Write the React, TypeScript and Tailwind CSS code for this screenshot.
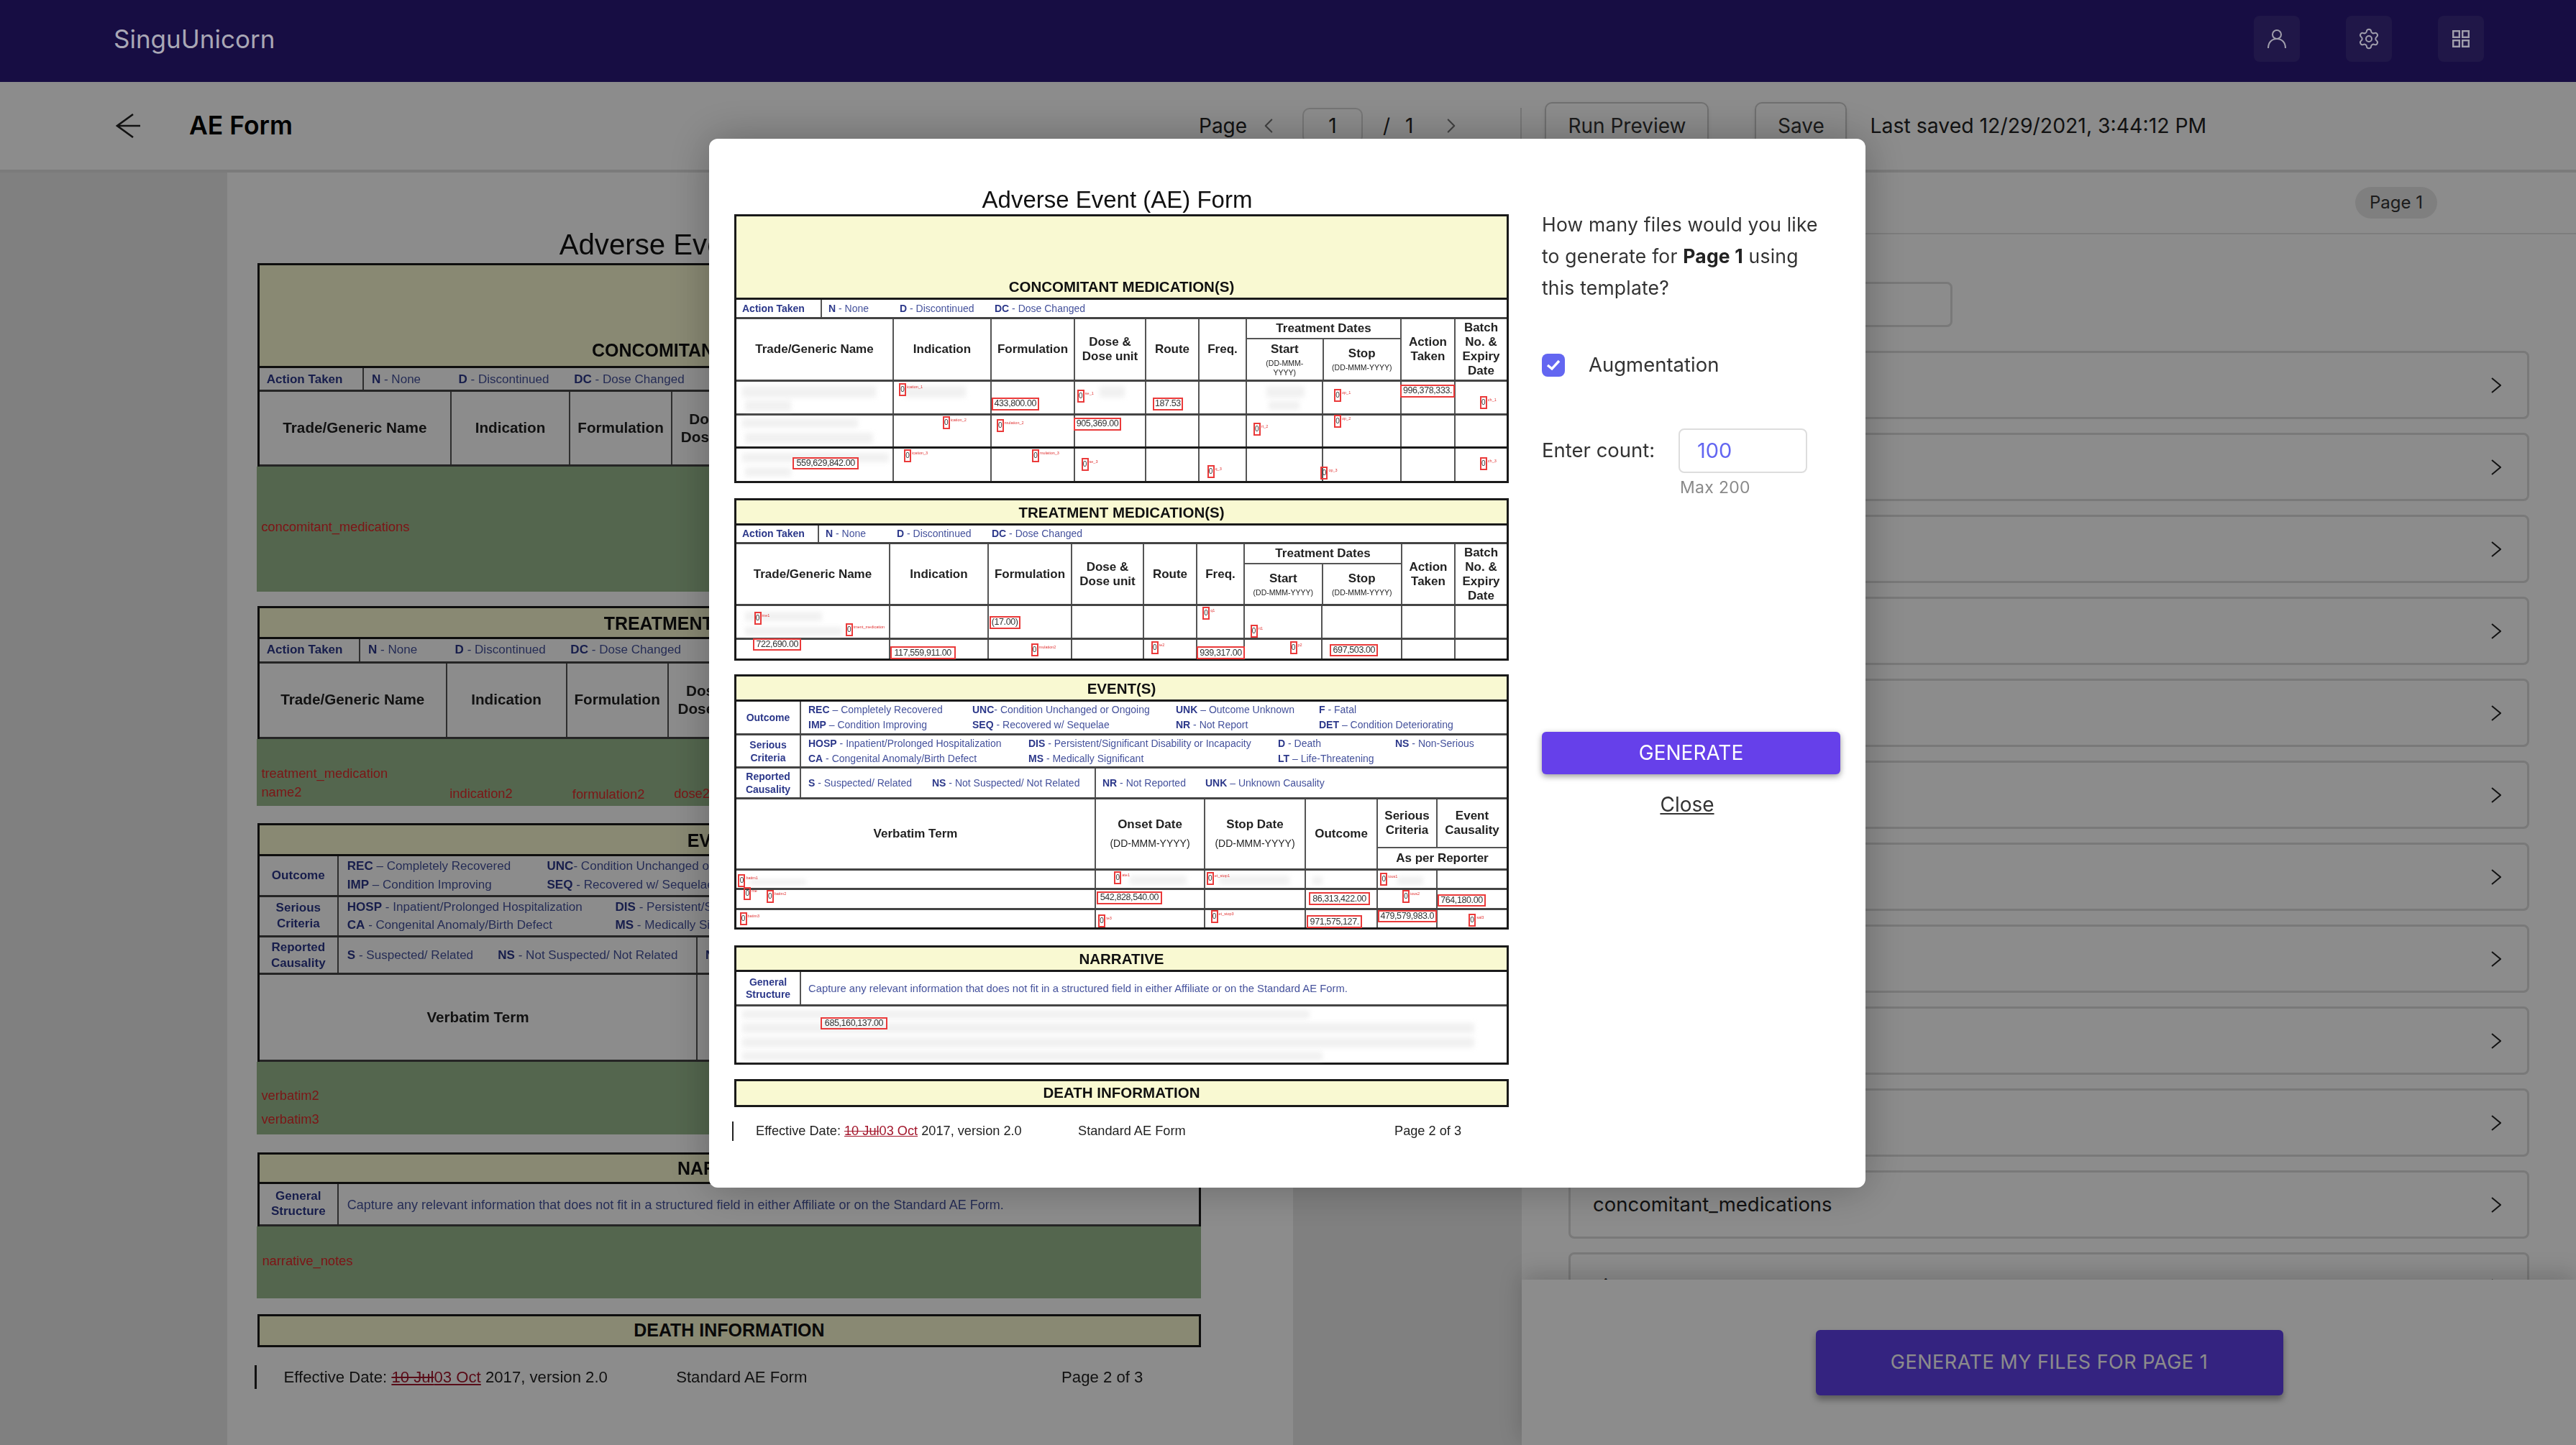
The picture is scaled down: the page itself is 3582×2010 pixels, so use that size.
import React from "react";
import { Settings, ChevronLeft, ChevronRight } from "lucide-react";

const BLUE = "text-[#45529c]";
const BOLD = "font-bold text-[#2c388a]";
const ARIAL = "font-['Liberation_Sans',Arial,sans-serif]";

type Z = [number, number, number, number];
const Z2: Z = [1000, 190, 1.4, 3];
const Z3: Z = [1000, 680, 1.4, 2.45];
const Z4: Z = [1000, 1290, 1.4, 3];
const ox = (z: Z, x: number) => z[0] + x / z[2] - 1021;
const oy = (z: Z, y: number) => z[1] + y / z[3] - 258;

const VALUES: [Z, number, number, number, number, string][] = [
  [Z2, 530, 1088, 623, 1142, "433,800.00"],
  [Z2, 844, 1088, 903, 1142, "187.53"],
  [Z2, 1326, 1034, 1432, 1088, "996,378,333."],
  [Z2, 690, 1172, 783, 1226, "905,369.00"],
  [Z2, 143, 1338, 272, 1390, "559,629,842.00"],
  [Z3, 526, 433, 586, 477, "(17.00)"],
  [Z3, 66, 510, 160, 552, "722,690.00"],
  [Z3, 333, 537, 460, 580, "117,559,911.00"],
  [Z3, 930, 537, 1023, 580, "939,317.00"],
  [Z3, 1189, 528, 1283, 570, "697,503.00"],
  [Z3, 735, 1371, 862, 1415, "542,828,540.00"],
  [Z3, 1148, 1375, 1267, 1418, "86,313,422.00"],
  [Z3, 1399, 1381, 1492, 1424, "764,180.00"],
  [Z3, 1144, 1453, 1252, 1496, "971,575,127."],
  [Z3, 1282, 1436, 1397, 1477, "479,579,983.0"],
  [Z4, 197, 374, 328, 427, "685,160,137.00"],
];

const PINS: [Z, number, number, string][] = [
  [Z2, 350, 1030, "ication_1"], [Z2, 697, 1056, "se_1"], [Z2, 1197, 1052, "op_1"], [Z2, 1481, 1082, "ch_1"],
  [Z2, 435, 1166, "ication_2"], [Z2, 540, 1178, "mulation_2"], [Z2, 1197, 1160, "op_2"], [Z2, 1040, 1194, "rt_2"],
  [Z2, 360, 1306, "ication_3"], [Z2, 609, 1306, "mulation_3"], [Z2, 705, 1340, "se_3"], [Z2, 950, 1370, "q_3"],
  [Z2, 1171, 1376, "op_3"], [Z2, 1481, 1338, "ch_3"],
  [Z3, 68, 418, "me1"], [Z3, 246, 458, "tment_medication"], [Z3, 941, 403, "q1"], [Z3, 1034, 463, "rt1"],
  [Z3, 607, 527, "mulation2"], [Z3, 841, 519, "te2"], [Z3, 1111, 519, "p2"],
  [Z3, 37, 1312, "batim1"], [Z3, 769, 1303, "ate1"], [Z3, 949, 1307, "et_stop1"], [Z3, 1287, 1308, "ious1"],
  [Z3, 48, 1358, "me"], [Z3, 92, 1367, "batim2"], [Z3, 1330, 1367, "ious2"], [Z3, 40, 1443, "batim3"],
  [Z3, 738, 1451, "te3"], [Z3, 957, 1435, "et_stop3"], [Z3, 1459, 1447, "sal3"],
];

const SMUDGES: [Z, number, number, number, number][] = [
  [Z2, 45, 1040, 305, 1090], [Z2, 50, 1100, 140, 1145], [Z2, 360, 1040, 480, 1090], [Z2, 740, 1040, 790, 1090],
  [Z2, 1065, 1040, 1140, 1090], [Z2, 1070, 1105, 1130, 1140], [Z2, 45, 1175, 270, 1215], [Z2, 50, 1235, 300, 1280],
  [Z2, 45, 1320, 330, 1360], [Z2, 50, 1380, 140, 1420],
  [Z3, 50, 420, 200, 450], [Z3, 50, 470, 240, 500], [Z3, 60, 1330, 170, 1350], [Z3, 800, 1318, 910, 1350],
  [Z3, 975, 1318, 1110, 1350], [Z3, 1155, 1320, 1175, 1350], [Z3, 1320, 1320, 1370, 1350],
  [Z4, 45, 345, 1150, 380], [Z4, 45, 400, 1470, 440], [Z4, 45, 460, 1470, 500], [Z4, 45, 520, 1175, 555],
];

function Section({ className = "", children }: { className?: string; children: React.ReactNode }) {
  return <div className={"relative flex flex-col border-[3px] border-[#1a1a1a] " + className}>{children}</div>;
}

function Banner({ title, className }: { title: string; className: string }) {
  return (
    <div className={"flex items-end justify-center border-b-[3px] border-[#1a1a1a] bg-[#f9f9d2] text-[20.5px] leading-[24px] font-bold text-[#111] " + className}>
      {title}
    </div>
  );
}

function ActionRow({ cols, className }: { cols: string; className: string }) {
  return (
    <div className={"flex items-center border-b-[3px] border-[#444] text-[14px] " + BLUE + " " + className}>
      <div className={"flex h-full items-center border-r-2 border-[#555] " + cols + " pl-[8px] " + BOLD}>Action Taken</div>
      <div className="ml-[9px] w-[99px]"><b className={BOLD}>N</b> - None</div>
      <div className="w-[132px]"><b className={BOLD}>D</b> - Discontinued</div>
      <div><b className={BOLD}>DC</b> - Dose Changed</div>
    </div>
  );
}

function Head({ className, children }: { className?: string; children: React.ReactNode }) {
  return <div className={"flex flex-col items-center justify-center border-r-2 border-[#555] text-center text-[17px] leading-[20px] font-bold text-[#222] last:border-r-0 " + (className ?? "")}>{children}</div>;
}

function MedHeader({ grid, className, wrapStart }: { grid: string; className: string; wrapStart?: boolean }) {
  return (
    <div className={"grid border-b-[3px] border-[#444] " + grid + " " + className}>
      <Head>Trade/Generic Name</Head>
      <Head>Indication</Head>
      <Head>Formulation</Head>
      <Head>Dose &amp;<br />Dose unit</Head>
      <Head>Route</Head>
      <Head>Freq.</Head>
      <div className="col-span-2 flex flex-col border-r-2 border-[#555]">
        <div className="flex h-[28px] shrink-0 items-center justify-center border-b-2 border-[#555] text-[17px] font-bold text-[#222]">Treatment Dates</div>
        <div className="grid flex-1 grid-cols-2">
          <Head>
            Start
            <span className="mt-[3px] text-[10.5px] leading-[13px] font-normal">
              {wrapStart ? <>(DD-MMM-<br />YYYY)</> : "(DD-MMM-YYYY)"}
            </span>
          </Head>
          <Head className="border-r-0">Stop<span className="mt-[3px] text-[10.5px] leading-[13px] font-normal">(DD-MMM-YYYY)</span></Head>
        </div>
      </div>
      <Head>Action<br />Taken</Head>
      <Head>Batch<br />No. &amp;<br />Expiry<br />Date</Head>
    </div>
  );
}

function Row({ grid, count, className }: { grid: string; count: number; className: string }) {
  return (
    <div className={"grid " + grid + " " + className}>
      {Array.from({ length: count }).map((_, i) => (
        <div key={i} className="border-r-2 border-[#555] last:border-r-0" />
      ))}
    </div>
  );
}

function Green({ className, children }: { className: string; children: React.ReactNode }) {
  return <div className={"relative -mx-[3px] -mb-[3px] bg-[#99bb8f] text-[15px] text-[#e02a2a] " + className}>{children}</div>;
}

const MED1 = "grid-cols-[219px_136px_116px_99px_74px_66px_106px_109px_75px_71px]";
const MED2 = "grid-cols-[214px_137px_116px_100px_74px_66px_108px_111px_74px_71px]";
const EVT = "grid-cols-[500px_152px_140px_100px_83px_96px]";

function Form({ bg }: { bg: boolean }) {
  return (
    <div className={"relative w-[1077px] blur-[0.35px] " + ARIAL}>
      <div className="flex h-[40px] items-center justify-center pr-[12px] text-[33px] leading-[40px] text-[#111]">Adverse Event (AE) Form</div>

      <Section>
        <Banner title="CONCOMITANT MEDICATION(S)" className={bg ? "h-[118px] pb-[6px]" : "h-[116px] pb-[3px]"} />
        <ActionRow cols="w-[119px]" className="h-[27px]" />
        <MedHeader grid={MED1} className={bg ? "h-[85px]" : "h-[87px]"} wrapStart />
        {bg ? (
          <Green className="h-[143px]">
            <span className="absolute top-[58px] left-[5px]">concomitant_medications</span>
          </Green>
        ) : (
          <>
            <Row grid={MED1} count={10} className="h-[47px] border-b-[3px] border-[#444]" />
            <Row grid={MED1} count={10} className="h-[46px] border-b-[3px] border-[#1a1a1a]" />
            <Row grid={MED1} count={10} className="h-[45px]" />
          </>
        )}
      </Section>

      <Section className={bg ? "mt-[17px]" : "mt-[21px]"}>
        <Banner title="TREATMENT MEDICATION(S)" className="h-[35px] pb-[3px]" />
        <ActionRow cols="w-[115px]" className={bg ? "h-[28px]" : "h-[26px]"} />
        <MedHeader grid={MED2} className="h-[86px]" />
        {bg ? (
          <Green className="h-[77px]">
            <span className="absolute top-[28px] left-[5px]">treatment_medication</span>
            <span className="absolute top-[50px] left-[5px]">name2</span>
            <span className="absolute top-[51px] left-[220px]">indication2</span>
            <span className="absolute top-[52px] left-[360px]">formulation2</span>
            <span className="absolute top-[51px] left-[476px]">dose2</span>
          </Green>
        ) : (
          <>
            <Row grid={MED2} count={10} className="h-[47px] border-b-[3px] border-[#444]" />
            <Row grid={MED2} count={10} className="h-[26px]" />
          </>
        )}
      </Section>

      <Section className={bg ? "mt-[20px]" : "mt-[19px]"}>
        <Banner title="EVENT(S)" className="h-[35px] pb-[3px]" />
        <div className={"flex h-[47px] border-b-[3px] border-[#444] text-[14px] leading-[21px] " + BLUE}>
          <div className={"flex w-[90px] shrink-0 items-center justify-center border-r-2 border-[#555] text-[14px] " + BOLD}>Outcome</div>
          <div className="grid flex-1 grid-cols-[228px_283px_199px_1fr] content-center pl-[10px]">
            <div><b className={BOLD}>REC</b> – Completely Recovered</div>
            <div><b className={BOLD}>UNC</b>- Condition Unchanged or Ongoing</div>
            <div><b className={BOLD}>UNK</b> – Outcome Unknown</div>
            <div><b className={BOLD}>F</b> - Fatal</div>
            <div><b className={BOLD}>IMP</b> – Condition Improving</div>
            <div><b className={BOLD}>SEQ</b> - Recovered w/ Sequelae</div>
            <div><b className={BOLD}>NR</b> - Not Report</div>
            <div><b className={BOLD}>DET</b> – Condition Deteriorating</div>
          </div>
        </div>
        <div className={"flex h-[46px] border-b-[3px] border-[#444] text-[14px] leading-[21px] " + BLUE}>
          <div className={"flex w-[90px] shrink-0 items-center justify-center border-r-2 border-[#555] text-center text-[14px] leading-[18px] " + BOLD}>Serious<br />Criteria</div>
          <div className="grid flex-1 grid-cols-[306px_347px_163px_1fr] content-center pl-[10px]">
            <div className="whitespace-nowrap"><b className={BOLD}>HOSP</b> - Inpatient/Prolonged Hospitalization</div>
            <div className="whitespace-nowrap"><b className={BOLD}>DIS</b> - Persistent/Significant Disability or Incapacity</div>
            <div><b className={BOLD}>D</b> - Death</div>
            <div><b className={BOLD}>NS</b> - Non-Serious</div>
            <div className="whitespace-nowrap"><b className={BOLD}>CA</b> - Congenital Anomaly/Birth Defect</div>
            <div><b className={BOLD}>MS</b> - Medically Significant</div>
            <div><b className={BOLD}>LT</b> – Life-Threatening</div>
            <div />
          </div>
        </div>
        <div className={"flex h-[43px] border-b-[3px] border-[#444] text-[14px] " + BLUE}>
          <div className={"flex w-[90px] shrink-0 items-center justify-center border-r-2 border-[#555] text-center text-[14px] leading-[18px] " + BOLD}>Reported<br />Causality</div>
          <div className="flex w-[410px] items-center border-r-2 border-[#555] pl-[10px] whitespace-nowrap">
            <span className="w-[172px]"><b className={BOLD}>S</b> - Suspected/ Related</span>
            <span><b className={BOLD}>NS</b> - Not Suspected/ Not Related</span>
          </div>
          <div className="flex items-center pl-[9px] whitespace-nowrap">
            <span className="w-[143px]"><b className={BOLD}>NR</b> - Not Reported</span>
            <span><b className={BOLD}>UNK</b> – Unknown Causality</span>
          </div>
        </div>
        <div className={"grid h-[99px] border-b-[3px] border-[#444] " + EVT}>
          <Head>Verbatim Term</Head>
          <Head>Onset Date<span className="mt-[6px] text-[14px] font-normal">(DD-MMM-YYYY)</span></Head>
          <Head>Stop Date<span className="mt-[6px] text-[14px] font-normal">(DD-MMM-YYYY)</span></Head>
          <Head>Outcome</Head>
          <div className="col-span-2 flex flex-col">
            <div className="grid h-[68px] grid-cols-[83px_96px] border-b-2 border-[#555]">
              <Head>Serious<br />Criteria</Head>
              <Head>Event<br />Causality</Head>
            </div>
            <div className="flex flex-1 items-center justify-center text-[17px] font-bold text-[#222]">As per Reporter</div>
          </div>
        </div>
        {bg ? (
          <Green className="h-[83px]">
            <span className="absolute top-[27px] left-[5px]">verbatim2</span>
            <span className="absolute top-[54px] left-[5px]">verbatim3</span>
          </Green>
        ) : (
          <>
            <Row grid={EVT} count={6} className="h-[27px] border-b-[3px] border-[#444]" />
            <Row grid={EVT} count={6} className="h-[28px] border-b-[3px] border-[#444]" />
            <Row grid={EVT} count={6} className="h-[24px]" />
          </>
        )}
      </Section>

      <Section className={bg ? "mt-[21px]" : "mt-[22px]"}>
        <Banner title="NARRATIVE" className="h-[34px] pb-[3px]" />
        <div className={"flex h-[48px] border-b-[3px] border-[#444] text-[14.8px] " + BLUE}>
          <div className={"flex w-[90px] shrink-0 items-center justify-center border-r-2 border-[#555] text-center text-[14px] leading-[17px] " + BOLD}>General<br />Structure</div>
          <div className="flex items-center pt-[2px] pl-[10px] whitespace-nowrap">Capture any relevant information that does not fit in a structured field in either Affiliate or on the Standard AE Form.</div>
        </div>
        {bg ? (
          <Green className="h-[82px]">
            <span className="absolute top-[28px] left-[6px]">narrative_notes</span>
          </Green>
        ) : (
          <div className="h-[78px]" />
        )}
      </Section>

      <Section className={bg ? "mt-[19px]" : "mt-[20px]"}>
        <div className="flex h-[33px] items-center justify-center bg-[#f9f9d2] text-[20.5px] font-bold text-[#111]">DEATH INFORMATION</div>
      </Section>

      <div className="mt-[20px] grid h-[26px] grid-cols-[30px_448px_440px_auto] items-center text-[18.2px] whitespace-nowrap text-[#222]">
        <div className="-ml-[3px] h-full w-[2px] bg-[#222]" />
        <div>
          Effective Date: <span className="text-[#a3172c] underline"><span className="line-through">10 Jul</span>03 Oct</span> 2017, version 2.0
        </div>
        <div>Standard AE Form</div>
        <div>Page 2 of 3</div>
      </div>

      {!bg && SMUDGES.map(([z, a, b, c, d], i) => (
        <div key={"s" + i} className="absolute bg-[#dcdcdc] opacity-40 blur-[3px]" style={{ left: ox(z, a), top: oy(z, b), width: (c - a) / z[2], height: (d - b) / z[3] }} />
      ))}
      {!bg && VALUES.map(([z, a, b, c, d, t]) => (
        <div key={t} className="absolute flex items-center justify-center overflow-hidden border-2 border-[#ea3a3a] text-[12.5px] leading-none tracking-[-0.4px] whitespace-nowrap text-[#333]" style={{ left: ox(z, a), top: oy(z, b), width: (c - a) / z[2], height: (d - b) / z[3] }}>
          {t}
        </div>
      ))}
      {!bg && PINS.map(([z, a, b, t], i) => (
        <div key={"p" + i} className="absolute flex" style={{ left: ox(z, a), top: oy(z, b) }}>
          <div className="flex h-[18px] w-[10px] items-center justify-center border-2 border-[#ea3a3a] text-[10px] leading-none text-[#333]">0</div>
          <div className="ml-[1px] text-[5.5px] leading-[10px] whitespace-nowrap text-[#e03030]">{t}</div>
        </div>
      ))}
    </div>
  );
}

function Chevron() {
  return (
    <svg width="14" height="22" viewBox="0 0 14 22" fill="none" stroke="#222" strokeWidth="2">
      <path d="M1 1 L13 11 L1 21" />
    </svg>
  );
}

const ROWS = ["", "", "", "", "", "", "", "", "", "", "concomitant_medications", "sign"];

export default function App() {
  return (
    <div className="relative flex h-[2010px] w-[3582px] flex-col overflow-hidden bg-white font-['Inter',sans-serif] text-[#222]">
      <header className="relative z-30 flex h-[114px] shrink-0 items-center justify-between bg-[#170d43] pr-[128px] pb-[6px] pl-[158px]">
        <div className="text-[35px] text-[#a9a7b5]">SinguUnicorn</div>
        <div className="flex gap-[64px] text-[#a09eac]">
          <button className="flex h-[64px] w-[64px] items-center justify-center rounded-[8px] bg-[#201748]">
            <svg width="26" height="28" viewBox="0 0 26 28" fill="none" stroke="currentColor" strokeWidth="2">
              <circle cx="13" cy="8" r="6" />
              <path d="M1 27 C1 19 6 14 13 14 S25 19 25 27" />
            </svg>
          </button>
          <button className="flex h-[64px] w-[64px] items-center justify-center rounded-[8px] bg-[#201748]">
            <Settings size={32} strokeWidth={1.5} />
          </button>
          <button className="flex h-[64px] w-[64px] items-center justify-center rounded-[8px] bg-[#201748]">
            <svg width="24" height="24" viewBox="0 0 24 24" fill="none" stroke="currentColor" strokeWidth="2.4">
              <rect x="1.2" y="1.2" width="8.6" height="8.6" />
              <rect x="14.2" y="1.2" width="8.6" height="8.6" />
              <rect x="1.2" y="14.2" width="8.6" height="8.6" />
              <rect x="14.2" y="14.2" width="8.6" height="8.6" />
            </svg>
          </button>
        </div>
      </header>

      <div className="flex h-[126px] shrink-0 items-center border-b-4 border-[#e0e0e0] bg-white pl-[161px]">
        <svg width="34" height="34" viewBox="0 0 34 34" fill="none" stroke="#222" strokeWidth="2.6">
          <path d="M24 1 L2 17 L24 33 M2 17 H34" />
        </svg>
        <div className="ml-[68px] w-[1404px] text-[35.5px] leading-none font-semibold text-black">AE Form</div>
        <span className="w-[64px] text-[28px] text-[#222]">Page</span>
        <ChevronLeft size={34} strokeWidth={1.5} className="ml-[16px] text-[#777]" />
        <div className="ml-[30px] flex h-[50px] w-[84px] items-center justify-center rounded-[10px] border-2 border-[#d6d6d6] text-[28px]">1</div>
        <span className="ml-[28px] text-[28px]">/</span>
        <span className="ml-[21px] text-[28px]">1</span>
        <ChevronRight size={34} strokeWidth={1.5} className="ml-[36px] text-[#777]" />
        <div className="ml-[79px] h-[50px] w-[2px] bg-[#d9d9d9]" />
        <button className="ml-[32px] h-[66px] w-[228px] rounded-[10px] border-2 border-[#ccc] text-[28px] text-[#333] shadow-md">Run Preview</button>
        <button className="ml-[64px] h-[66px] w-[128px] rounded-[10px] border-2 border-[#ccc] text-[28px] text-[#333] shadow-md">Save</button>
        <span className="ml-[32px] text-[28.4px] whitespace-nowrap text-[#222]">Last saved 12/29/2021, 3:44:12 PM</span>
      </div>

      <main className="flex min-h-0 flex-1">
        <div className="w-[2116px] shrink-0 bg-[#e9e9e9] pl-[316px]">
          <div className="h-full w-[1482px] bg-white pt-[77px] pl-[42px]">
            <div className="origin-top-left [zoom:1.218]">
              <Form bg />
            </div>
          </div>
        </div>

        <div className="relative flex min-w-0 flex-1 flex-col bg-white">
          <div className="flex h-[86px] shrink-0 items-center justify-end border-b-2 border-[#e4e4e4] pr-[193px]">
            <span className="flex h-[44px] w-[114px] items-center justify-center rounded-full bg-[#e8e8e8] text-[24px] text-[#333]">Page 1</span>
          </div>
          <div className="flex flex-col px-[65px] pt-[66px]">
            <div className="h-[63px] w-[534px] rounded-[8px] border-[3px] border-[#dcdcdc]" />
            <div className="mt-[33px] flex flex-col gap-[19px]">
              {ROWS.map((r, i) => (
                <div key={i} className="flex h-[95px] shrink-0 items-center justify-between rounded-[8px] border-[3px] border-[#dcdcdc] pr-[36px] pl-[31px] text-[27.5px] text-[#222]">
                  <span>{r}</span>
                  <Chevron />
                </div>
              ))}
            </div>
          </div>
          <div className="absolute right-0 bottom-0 left-0 flex h-[230px] items-center justify-center bg-white shadow-[0_-8px_30px_rgba(0,0,0,0.18)]">
            <button className="ml-[1px] h-[91px] w-[650px] rounded-[6px] bg-[#6040e9] text-[27px] tracking-[0.5px] text-white shadow-[0_6px_10px_rgba(0,0,0,0.35)]">GENERATE MY FILES FOR PAGE 1</button>
          </div>
        </div>
      </main>

      <div className="absolute inset-x-0 top-[114px] bottom-0 z-10 bg-black/45" />

      <section className="absolute top-[193px] left-[986px] z-20 flex h-[1459px] w-[1608px] rounded-[12px] bg-white shadow-[0_0_60px_rgba(0,0,0,0.28)]">
        <div className="w-[1158px] shrink-0 pt-[65px] pl-[35px]">
          <Form bg={false} />
        </div>
        <div className="flex w-[416px] flex-col pt-[97px] text-[#333]">
          <p className="max-w-[392px] text-[26.5px] leading-[44px] tracking-[0.2px]">
            How many files would you like to generate for <b className="font-bold text-[#222]">Page 1</b> using this template?
          </p>
          <label className="mt-[70px] flex h-[32px] items-center">
            <span className="flex h-[32px] w-[32px] items-center justify-center rounded-[8px] bg-[#6366f1]">
              <svg width="20" height="16" viewBox="0 0 20 16" fill="none" stroke="white" strokeWidth="3.4">
                <path d="M2 8 L8 13 L18 2" />
              </svg>
            </span>
            <span className="ml-[33px] text-[27.5px]">Augmentation</span>
          </label>
          <div className="mt-[72px] flex items-center">
            <span className="w-[190px] text-[27.5px]">Enter count:</span>
            <span className="flex h-[62px] w-[179px] items-center rounded-[8px] border-2 border-[#dddddd] pl-[24px] text-[29px] text-[#6366f1]">100</span>
          </div>
          <span className="mt-[3px] ml-[192px] text-[23px] tracking-[0.3px] text-[#8a8a8a]">Max 200</span>
          <button className="mt-[322px] h-[59px] w-[415px] rounded-[6px] bg-[#6640ea] text-[28px] text-white shadow-[0_3px_8px_rgba(0,0,0,0.4)]">GENERATE</button>
          <a className="mt-[21px] mr-[12px] self-center text-[28px] text-[#333] underline">Close</a>
        </div>
      </section>
    </div>
  );
}
